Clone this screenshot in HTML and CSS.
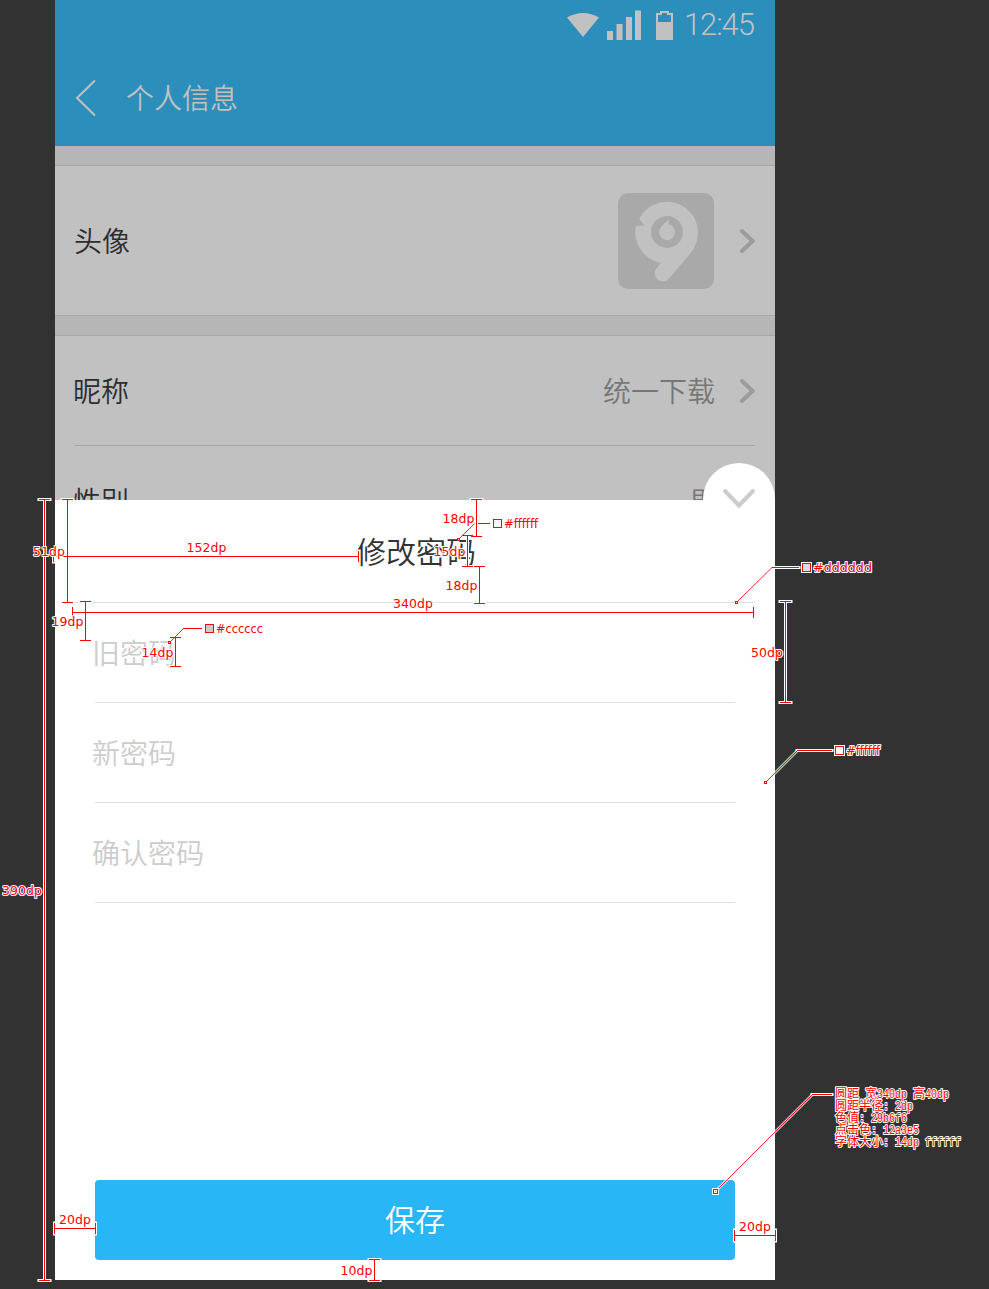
FILE: index.html
```html
<!DOCTYPE html>
<html lang="zh-CN">
<head>
<meta charset="utf-8">
<title>修改密码</title>
<link rel="stylesheet" href="styles.css">
</head>
<body>
<main class="board">
  <div class="phone">
    <div class="screen">
      <header class="header">
        <div class="status">
          <svg class="status-icons" width="108" height="32" viewBox="566 10 108 32">
            <path d="M567 17.500Q583 8.500 599 17.500L583 37Z"/>
            <path d="M607 31h6v9h-6zM616.500 24h6v16h-6zM626 17h6v23h-6zM635 10.500h6v29.500h-6z"/>
            <path fill-rule="evenodd" d="M656 13h4v-2h9v2h4v27h-17zM658 15v7h13v-7h-4v-2h-5v2z"/>
          </svg>
          <span class="time">12:45</span>
        </div>
        <div class="nav">
          <svg class="back" width="22" height="38" viewBox="0 0 22 38"><path d="M20 1.500L2 19L20 36.500"/></svg>
          <h1 class="nav-title">个人信息</h1>
        </div>
      </header>
      <section class="group group-avatar">
        <div class="row row-avatar">
          <span class="label label-avatar">头像</span>
          <svg class="avatar" width="96" height="96" viewBox="618 193 96 96">
            <rect class="avatar-bg" x="618" y="193" width="96" height="96" rx="10"/>
            <path class="avatar-mark" fill-rule="evenodd" d="M639.200 219A31 31 0 0 1 698 232C698 240 695 248 690 254L669 278.500A7.900 7.900 0 0 1 656.500 268.500L661 263A31 31 0 0 1 636 226L644.500 225.500ZM667 216a16 16 0 1 0 .01 0Z"/>
            <path class="avatar-mark" d="M669 219.500L668.300 224.200A8 8 0 1 1 660 228.500Q664 223 669 219.500Z"/>
          </svg>
          <svg class="chevron" width="18" height="26" viewBox="0 0 18 26"><path d="M5 3L15.500 13L5 23"/></svg>
        </div>
      </section>
      <section class="group">
        <div class="row row-line">
          <span class="label label-left">昵称</span>
          <span class="value">统一下载</span>
          <svg class="chevron chevron-near" width="18" height="26" viewBox="0 0 18 26"><path d="M5 3L15.500 13L5 23"/></svg>
        </div>
        <div class="row">
          <span class="label label-left">性别</span>
          <span class="value value-gender">男</span>
        </div>
      </section>
    </div>
    <section class="sheet">
      <button class="close" aria-label="关闭">
        <svg width="36" height="24" viewBox="0 0 36 24"><path d="M4 4L18 18.500L32 4"/></svg>
      </button>
      <h2 class="sheet-title">修改密码</h2>
      <div class="fields">
        <div class="field">旧密码</div>
        <div class="field">新密码</div>
        <div class="field">确认密码</div>
      </div>
      <button class="save">保存</button>
    </section>
  </div>

  <svg class="notes" width="989" height="1289" viewBox="0 0 989 1289">
    <defs>
      <g id="dims">
        <path d="M44.500 499.500V1280.500M39 499.500H50M39 1280.500H50"/>
        <path d="M67.500 499.500V602.500M62 499.500H73M62 602.500H73"/>
        <path d="M53.500 556.500H358.500M53.500 551V562M358.500 551V562"/>
        <path d="M72.500 612.500H753.500M72.500 607V618M753.500 607V618"/>
        <path d="M85.500 601.500V640.500M80 601.500H91M80 640.500H91"/>
        <path d="M175.500 637.500V666.500M170 637.500H181M170 666.500H181"/>
        <path d="M476.500 499.500V536.500M471 499.500H482M471 536.500H482"/>
        <path d="M467.500 535.500V566.500M462 535.500H473M462 566.500H473"/>
        <path d="M479.500 566.500V603.500M474 566.500H485M474 603.500H485"/>
        <path d="M785.500 601.500V702.500M780 601.500H791M780 702.500H791"/>
        <path d="M54.500 1228.500H95.500M54.500 1223V1234M95.500 1223V1234"/>
        <path d="M734.500 1235.500H775.500M734.500 1230V1241M775.500 1230V1241"/>
        <path d="M374.500 1259.500V1280.500M369 1259.500H380M369 1280.500H380"/>
        <path d="M478 523.500H490M183 628.500H202M772 567.500H799M797 750.500H832M812 1094.500H832"/>
      </g>
      <path id="leaders" d="M458.500 539.500L474.500 523.500M169.500 642.500L183.500 628.500M736.500 602.500L772 567.500M765.500 782.500L797.500 750.500M715.500 1191.500L812.500 1094.500"/>
    </defs>
    <use href="#dims" class="halo"/>
    <use href="#leaders" class="halo-soft"/>
    <use href="#dims" class="ink"/>
    <use href="#leaders" class="ink-soft"/>
    <g class="anchors">
      <rect x="457.500" y="538.500" width="2" height="2"/>
      <rect x="168.500" y="641.500" width="2" height="2"/>
      <rect x="735.500" y="601.500" width="2" height="2"/>
      <rect x="764.500" y="781.500" width="2" height="2"/>
    </g>
    <g class="swatch-halo">
      <rect x="802.500" y="563.500" width="8" height="8"/>
      <rect x="835.500" y="746.500" width="8" height="8"/>
      <rect x="713.500" y="1189.500" width="4" height="4"/>
    </g>
    <g class="swatches">
      <rect class="white" x="493.500" y="519.500" width="8" height="8"/>
      <rect class="gray" x="205.500" y="624.500" width="8" height="8"/>
      <rect class="light" x="802.500" y="563.500" width="8" height="8"/>
      <rect class="white" x="835.500" y="746.500" width="8" height="8"/>
      <rect class="white" x="713.500" y="1189.500" width="4" height="4"/>
    </g>
    <rect class="blue-dot" x="715" y="1191" width="1" height="1"/>
    <g class="dim-text">
      <text x="33" y="556" textLength="32">51dp</text>
      <text x="186.500" y="552" textLength="40">152dp</text>
      <text x="442.500" y="523" textLength="32">18dp</text>
      <text x="433.500" y="556" textLength="32">15dp</text>
      <text x="445.500" y="590" textLength="32">18dp</text>
      <text x="393" y="608" textLength="40">340dp</text>
      <text x="51.500" y="626" textLength="32">19dp</text>
      <text x="141.500" y="657" textLength="32">14dp</text>
      <text x="751" y="657" textLength="32">50dp</text>
      <text x="2" y="895" textLength="40">390dp</text>
      <text x="59" y="1224" textLength="32">20dp</text>
      <text x="739" y="1231" textLength="32">20dp</text>
      <text x="340.500" y="1275" textLength="32">10dp</text>
    </g>
    <g class="color-text">
      <text x="504" y="528" textLength="34" lengthAdjust="spacingAndGlyphs">#ffffff</text>
      <text x="216" y="633" textLength="47" lengthAdjust="spacingAndGlyphs">#cccccc</text>
      <text x="813" y="572" textLength="59" lengthAdjust="spacingAndGlyphs">#dddddd</text>
      <text x="846" y="755" textLength="34" lengthAdjust="spacingAndGlyphs">#ffffff</text>
    </g>
    <g class="spec-text">
      <text x="835" y="1098">圆距</text>
      <text x="865" y="1098">宽</text>
      <text class="mono" x="877" y="1098" textLength="30" lengthAdjust="spacingAndGlyphs">340dp</text>
      <text x="913" y="1098">高</text>
      <text class="mono" x="925" y="1098" textLength="24" lengthAdjust="spacingAndGlyphs">40dp</text>
      <text x="835" y="1110">圆距半径</text>
      <text class="mono" x="883" y="1110" textLength="30" lengthAdjust="spacingAndGlyphs">: 2dp</text>
      <text x="835" y="1122">色值</text>
      <text class="mono" x="859" y="1122" textLength="48" lengthAdjust="spacingAndGlyphs">: 29b6f6</text>
      <text x="835" y="1134">点击色</text>
      <text class="mono" x="871" y="1134" textLength="48" lengthAdjust="spacingAndGlyphs">: 12a3e5</text>
      <text x="835" y="1146">字体大小</text>
      <text class="mono" x="883" y="1146" textLength="78" lengthAdjust="spacingAndGlyphs">: 14dp ffffff</text>
    </g>
  </svg>
</main>
</body>
</html>
```
FILE: styles.css
```css
* { box-sizing: border-box; }

body {
  margin: 0;
  background: #323232;
  font-family: "Noto Sans CJK SC DemiLight", "Noto Sans CJK SC", sans-serif;
  font-weight: 350;
}

.board {
  position: relative;
  width: 989px;
  height: 1289px;
  padding-left: 55px;
  overflow: hidden;
}

.phone { width: 720px; height: 1280px; }

.screen {
  height: 500px;
  overflow: hidden;
  background: #b6b6b6;
}

.header {
  height: 146px;
  background: #2c8ebb;
  color: #c1c1c1;
}

.status {
  display: flex;
  justify-content: flex-end;
  height: 50px;
  padding: 10px 20px 0 0;
}

.status-icons { fill: #c1c1c1; margin-right: 10px; }

.time {
  width: 71px;
  font: 350 31px/30px Roboto, sans-serif;
  letter-spacing: -1.100px;
  white-space: nowrap;
}

.nav {
  display: flex;
  align-items: center;
  height: 96px;
  padding-left: 20px;
}

.back { fill: none; stroke: #c1c1c1; stroke-width: 2; }

.nav-title {
  margin: -2px 0 0 29px;
  font-size: 28px;
  font-weight: 350;
  line-height: 40px;
}

.group {
  margin-top: 19px;
  border-top: 1px solid #a6a6a6;
  background: #c1c1c1;
}

.group-avatar { border-bottom: 1px solid #a6a6a6; }

.row {
  display: flex;
  align-items: center;
  height: 110px;
  margin: 0 20px;
}

.row-avatar { height: 149px; }
.row-line { border-bottom: 1px solid #a6a6a6; }

.label {
  flex: 1;
  margin-top: -2px;
  font-size: 28px;
  line-height: 40px;
  color: #2d2d2d;
}

.label-avatar { margin-left: -1px; }
.label-left { margin-left: -2px; }
.avatar-bg { fill: #a9a9a9; }
.avatar-mark { fill: #c1c1c1; }

.chevron {
  margin-left: 23px;
  fill: none;
  stroke: #9c9c9c;
  stroke-width: 4;
  stroke-linecap: round;
}

.chevron-near { margin-left: 22px; }

.value { margin-top: -2px; font-size: 28px; line-height: 40px; color: #777; }
.value-gender { margin-right: 38px; }

.sheet {
  position: relative;
  display: flex;
  flex-direction: column;
  height: 780px;
  padding: 0 20px 20px;
  background: #fff;
}

.close {
  position: absolute;
  top: -37px;
  right: 0;
  width: 72px;
  height: 72px;
  padding: 0;
  border: 0;
  border-radius: 50%;
  background: #fff;
}

.close svg {
  display: block;
  margin: 0 auto;
  fill: none;
  stroke: #ccc;
  stroke-width: 4;
  stroke-linecap: round;
}

.sheet-title {
  margin: 0;
  height: 103px;
  padding-left: 2px;
  border-bottom: 1px solid #ddd;
  font-size: 30px;
  font-weight: 350;
  line-height: 101px;
  text-align: center;
  color: #333;
}

.fields { padding: 0 20px; }

.field {
  height: 100px;
  border-bottom: 1px solid #ddd;
  font-size: 28px;
  line-height: 98px;
  color: #ccc;
  text-indent: -3px;
}

.save {
  height: 80px;
  margin: auto 20px 0;
  padding: 0 0 4px;
  border: 0;
  border-radius: 4px;
  background: #29b6f6;
  color: #fff;
  font: 350 30px/76px "Noto Sans CJK SC DemiLight", "Noto Sans CJK SC", sans-serif;
}

.notes { position: absolute; inset: 0; pointer-events: none; }
.halo { fill: none; stroke: #fff; stroke-width: 3; stroke-linecap: square; }
.ink { fill: none; stroke: #f00; stroke-width: 1; }
.halo-soft { fill: none; stroke: #fff; stroke-width: 3; opacity: .65; }
.ink-soft { fill: none; stroke: #f00; stroke-width: 1; opacity: .85; }
.anchors { fill: #fff; stroke: #f00; }
.swatch-halo { fill: none; stroke: #fff; stroke-width: 3; }
.swatches { stroke: #f00; }
.white { fill: #fff; }
.gray { fill: #ccc; }
.light { fill: #ddd; }
.blue-dot { fill: #29b6f6; }

.notes text {
  fill: #f00;
  stroke: #fff;
  stroke-width: 2px;
  stroke-linejoin: round;
  paint-order: stroke;
  font-weight: 400;
}

.dim-text, .color-text { font-family: "DejaVu Sans", sans-serif; font-size: 12.500px; }
.color-text { font-size: 12px; }
.spec-text { font-family: "Noto Sans CJK SC", sans-serif; font-size: 12px; }
.mono { font-family: "Liberation Mono", monospace; font-size: 12px; }
```
